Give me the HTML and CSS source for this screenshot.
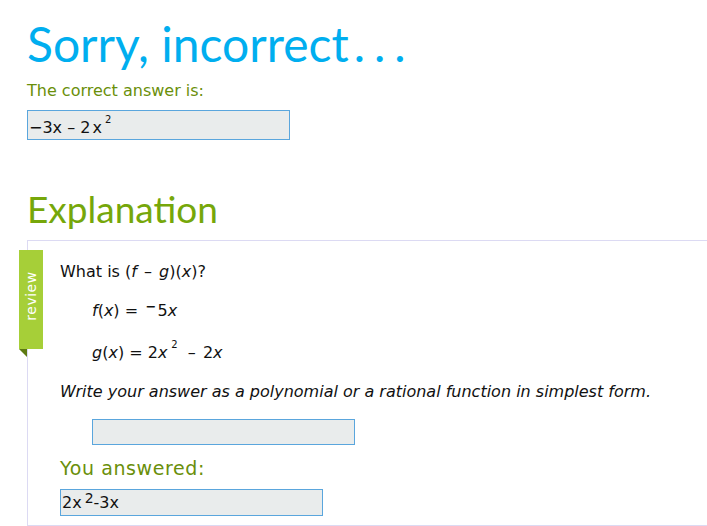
FILE: index.html
```html
<!doctype html>
<html>
  <head>
    <link rel="stylesheet" href="styles.css">
    <title>Sorry, incorrect</title>
  </head>
  <body>
    <div id="page-wrapper">
      <h1 class="result-title">Sorry, incorrect<span class="dots">...</span></h1>
      <p class="answer-label">The correct answer is:</p>
      <div class="answer-box correct">&minus;3x &ndash; 2<span class="var-x">x</span><sup>2</sup></div>

      <h2 class="section-title">Explanation</h2>
      <div class="explanation">
        <div class="review-tab"><span>review</span></div>
        <div class="explanation-body">
          <p class="question">What is (<i>f</i> <span class="op">&ndash;</span> <i>g</i>)(<i>x</i>)?</p>
          <p class="formula"><i>f</i>(<i>x</i>) = <span class="neg">&minus;</span>5<i>x</i></p>
          <p class="formula"><i>g</i>(<i>x</i>) = 2<i>x</i><sup>2</sup> <span class="op">&ndash;</span> 2<i>x</i></p>
          <p class="instructions"><i>Write your answer as a polynomial or a rational function in simplest form.</i></p>
          <div class="answer-box empty"></div>
          <p class="you-answered">You answered:</p>
          <div class="answer-box given">2x<sup class="plain">2</sup>-3x</div>
        </div>
      </div>
    </div>
  </body>
</html>
```
FILE: styles.css
```css
body {
  margin: 0;
  font-family: "DejaVu Sans", Verdana, sans-serif;
  color: #111;
  background: #fff;
}

#page-wrapper {
  padding: 0 0 0 27px;
}

p {
  margin: 0;
}

.result-title {
  margin: 0;
  padding-top: 12px;
  font-family: Lato, "Open Sans", sans-serif;
  font-size: 48px;
  font-weight: normal;
  line-height: 64px;
  color: #00aeef;
}

.dots {
  letter-spacing: 9px;
  margin-left: 5px;
}

.answer-label {
  margin-top: 5px;
  font-size: 16px;
  line-height: 19px;
  color: #6a8f0a;
}

.answer-box {
  box-sizing: border-box;
  border: 1px solid #5aa6dd;
  background: #e9ecec;
  font-size: 16px;
  color: #111;
}

.answer-box sup {
  font-size: 10px;
  vertical-align: 10px;
  line-height: 0;
  margin-left: 3px;
}

.answer-box sup.plain {
  font-size: 14px;
  vertical-align: 5px;
  margin-left: 3px;
}

.answer-box.correct {
  margin-top: 10px;
  width: 263px;
  height: 30px;
  padding: 7px 0 0 1px;
  line-height: 20px;
}

.var-x {
  margin-left: 2px;
}

.section-title {
  margin: 45px 0 0 0;
  font-family: Lato, "Open Sans", sans-serif;
  font-size: 37px;
  font-weight: normal;
  line-height: 48px;
  color: #76a70a;
}

.explanation {
  margin-top: 7px;
  position: relative;
  border-top: 1px solid #dcdaf3;
  border-left: 1px solid #dcdaf3;
  border-bottom: 1px solid #dcdaf3;
  height: 286px;
  box-sizing: border-box;
}

.review-tab {
  position: absolute;
  left: -9px;
  top: 9px;
  width: 24px;
  height: 99px;
  padding-bottom: 8px;
  box-sizing: border-box;
  background: #a6cf38;
  display: flex;
  align-items: center;
  justify-content: center;
}

.review-tab::after {
  content: "";
  position: absolute;
  left: 0;
  bottom: -8px;
  border-top: 8px solid #5d7a12;
  border-left: 8px solid transparent;
}

.review-tab span {
  transform: rotate(-90deg);
  color: #fff;
  font-size: 14px;
  letter-spacing: 0.5px;
  white-space: nowrap;
}

.explanation-body {
  padding: 21px 0 0 32px;
}

.question {
  font-size: 16px;
  line-height: 20px;
}

.op {
  margin: 0 2px;
}

.formula {
  margin-top: 19px;
  padding-left: 32px;
  font-size: 16px;
  line-height: 20px;
}

.formula + .formula {
  margin-top: 22px;
}

.formula sup {
  font-size: 10px;
  vertical-align: 10px;
  line-height: 0;
  margin-left: 4px;
  margin-right: 3px;
}

.neg {
  display: inline-block;
  margin-left: 1px;
  transform: translateY(-4px) scaleX(0.8);
}

.instructions {
  margin-top: 19px;
  font-size: 16px;
  line-height: 20px;
}

.answer-box.empty {
  margin: 17px 0 0 32px;
  width: 263px;
  height: 26px;
}

.you-answered {
  margin-top: 10px;
  font-size: 19px;
  letter-spacing: 0.6px;
  line-height: 26px;
  color: #6a8f0a;
}

.answer-box.given {
  margin-top: 8px;
  width: 263px;
  height: 27px;
  padding: 3px 0 0 1px;
  line-height: 20px;
}
```
